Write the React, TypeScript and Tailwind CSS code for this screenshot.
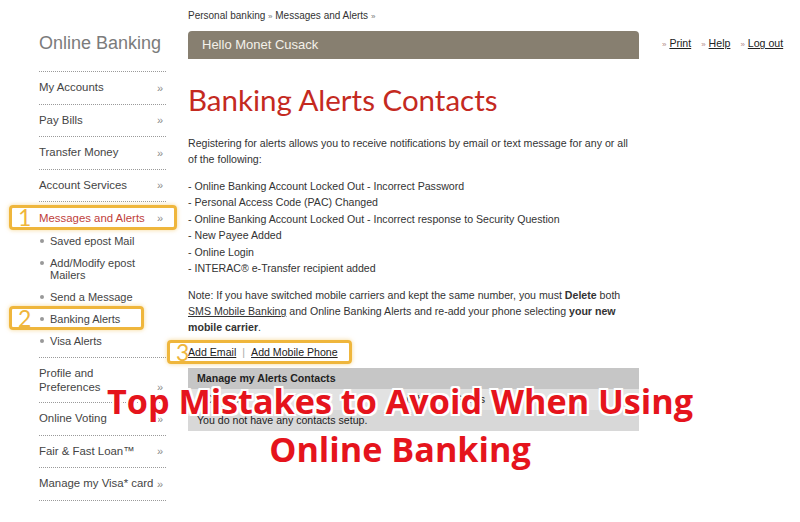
const navTop = [
  { label: "My Accounts" },
  { label: "Pay Bills" },
  { label: "Transfer Money" },
  { label: "Account Services" },
];

const subItems = ["Saved epost Mail", "Add/Modify epost Mailers", "Send a Message", "Banking Alerts", "Visa Alerts"];

const navBottom = ["Online Voting", "Fair & Fast Loan™"];

const alertTypes = [
  "Online Banking Account Locked Out - Incorrect Password",
  "Personal Access Code (PAC) Changed",
  "Online Banking Account Locked Out - Incorrect response to Security Question",
  "New Payee Added",
  "Online Login",
  "INTERAC® e-Transfer recipient added",
];

function Chevron() {
  return <span className="text-[11px] text-[#8a8a8a]">»</span>;
}

function NavRow({ label, active = false, border = true }: { label: string; active?: boolean; border?: boolean }) {
  return (
    <div
      className={`flex h-[32.5px] items-center justify-between pr-[3px] text-[11.4px] ${
        border ? "border-b border-dotted border-[#9a9a9a]" : ""
      } ${active ? "text-[#c0403a]" : "text-[#444]"}`}
    >
      <span>{label}</span>
      <Chevron />
    </div>
  );
}

function Marker({ n, className }: { n: string; className: string }) {
  return (
    <div
      className={`absolute rounded-[4px] border-[3px] border-[#efb63c] shadow-[0_0_4px_rgba(239,182,60,0.55)] ${className}`}
    >
      <span className="absolute left-[6px] top-[-3px] font-['Lato',sans-serif] text-[23px] leading-[24px] text-[#efb63c]">
        {n}
      </span>
    </div>
  );
}

export default function App() {
  return (
    <div className="relative h-[522px] w-[800px] overflow-hidden bg-white font-['Liberation_Sans',Arial,sans-serif]">
      <div className="flex">
        {/* Sidebar */}
        <aside className="ml-[39px] w-[127px] pt-[33px]">
          <h2 className="text-[18px] leading-[20px] text-[#7b7b7b]">Online Banking</h2>
          <div className="mt-[18px] border-t border-dotted border-[#9a9a9a]">
            {navTop.map((item) => (
              <NavRow key={item.label} label={item.label} />
            ))}
            <NavRow label="Messages and Alerts" active border={false} />
            <ul className="flex flex-col gap-[10px] border-b border-dotted border-[#9a9a9a] pb-[10px] pt-[0.5px]">
              {subItems.map((s) => (
                <li key={s} className="flex text-[11px] leading-[12px] text-[#444]">
                  <span className="ml-[1px] mt-[4px] mr-[6px] h-[4px] w-[4px] shrink-0 rounded-full bg-[#999]" />
                  <span className="w-[95px]">{s}</span>
                </li>
              ))}
            </ul>
            <div className="flex h-[45px] items-center justify-between border-b border-dotted border-[#9a9a9a] pr-[3px] text-[11.4px] leading-[14px] text-[#444]">
              <span>
                Profile and
                <br />
                Preferences
              </span>
              <span className="self-end pb-[8px]">
                <Chevron />
              </span>
            </div>
            {navBottom.map((label) => (
              <NavRow key={label} label={label} />
            ))}
            <NavRow label="Manage my Visa* card" />
          </div>
        </aside>

        {/* Main content */}
        <main className="ml-[22px] w-[451px] pt-[9px] text-[#333]">
          <div className="text-[10px] leading-[14px] text-[#333]">
            Personal banking <span className="text-[8px] text-[#777]">»</span> Messages and Alerts{" "}
            <span className="text-[8px] text-[#777]">»</span>
          </div>
          <div className="mt-[7px] flex h-[28px] items-center rounded-t-[4px] bg-[#877f70] pl-[14px] text-[13px] text-[#f4f1ea]">
            Hello Monet Cusack
          </div>

          <h1 className="mt-[23px] font-['Lato',sans-serif] text-[29.5px] leading-[36px] text-[#c42a1f]">
            Banking Alerts Contacts
          </h1>

          <p className="mt-[17px] text-[10.6px] leading-[16px]">
            Registering for alerts allows you to receive notifications by email or text message for any or all
            <br />
            of the following:
          </p>

          <ul className="mt-[11px] text-[10.6px] leading-[16.4px]">
            {alertTypes.map((a) => (
              <li key={a}>- {a}</li>
            ))}
          </ul>

          <p className="mt-[11px] text-[10.6px] leading-[16px]">
            Note: If you have switched mobile carriers and kept the same number, you must <b>Delete</b> both
            <br />
            <u>SMS Mobile Banking</u> and Online Banking Alerts and re-add your phone selecting <b>your new</b>
            <br />
            <b>mobile carrier</b>.
          </p>

          <div className="mt-[9px] flex items-center gap-[6px] text-[10.6px] leading-[16px] text-[#222]">
            <u>Add Email</u>
            <span className="text-[#aaa]">|</span>
            <u>Add Mobile Phone</u>
          </div>

          <div className="mt-[8px] text-[10.6px] text-[#222]">
            <div className="flex h-[21px] items-center bg-[#c6c6c6] pl-[9px] font-bold">Manage my Alerts Contacts</div>
            <div className="flex h-[21px] items-center bg-[#e2e2e2] pl-[17px]">
              <span className="w-[150px]">Contact</span>
              <span className="w-[100px] pl-[40px]">Number</span>
              <span>Status</span>
            </div>
            <div className="flex h-[21px] items-center bg-[#d8d8d8] pl-[9px]">You do not have any contacts setup.</div>
          </div>
        </main>

        {/* Utility links */}
        <nav className="ml-[23px] mt-[36px] flex h-[14px] gap-[10px] text-[10.6px] leading-[14px] text-[#222]">
          <span>
            <span className="text-[8px] text-[#b08a8a]">»</span> <u>Print</u>
          </span>
          <span>
            <span className="text-[8px] text-[#b08a8a]">»</span> <u>Help</u>
          </span>
          <span>
            <span className="text-[8px] text-[#b08a8a]">»</span> <u>Log out</u>
          </span>
        </nav>
      </div>

      {/* Step markers */}
      <Marker n="1" className="left-[9px] top-[205px] h-[25px] w-[168px]" />
      <Marker n="2" className="left-[9px] top-[306px] h-[24px] w-[135px]" />
      <Marker n="3" className="left-[167px] top-[340px] h-[24px] w-[185px]" />

      {/* Headline banner */}
      <div className="pointer-events-none absolute left-0 right-0 top-[377px] text-center font-['Open_Sans',sans-serif] text-[34.2px] font-bold leading-[48px] text-[#e5141c] [text-shadow:2px_0_0_#fff,-2px_0_0_#fff,0_2px_0_#fff,0_-2px_0_#fff,2px_2px_0_#fff,-2px_-2px_0_#fff,2px_-2px_0_#fff,-2px_2px_0_#fff]">
        Top Mistakes to Avoid When Using
        <br />
        Online Banking
      </div>
    </div>
  );
}
